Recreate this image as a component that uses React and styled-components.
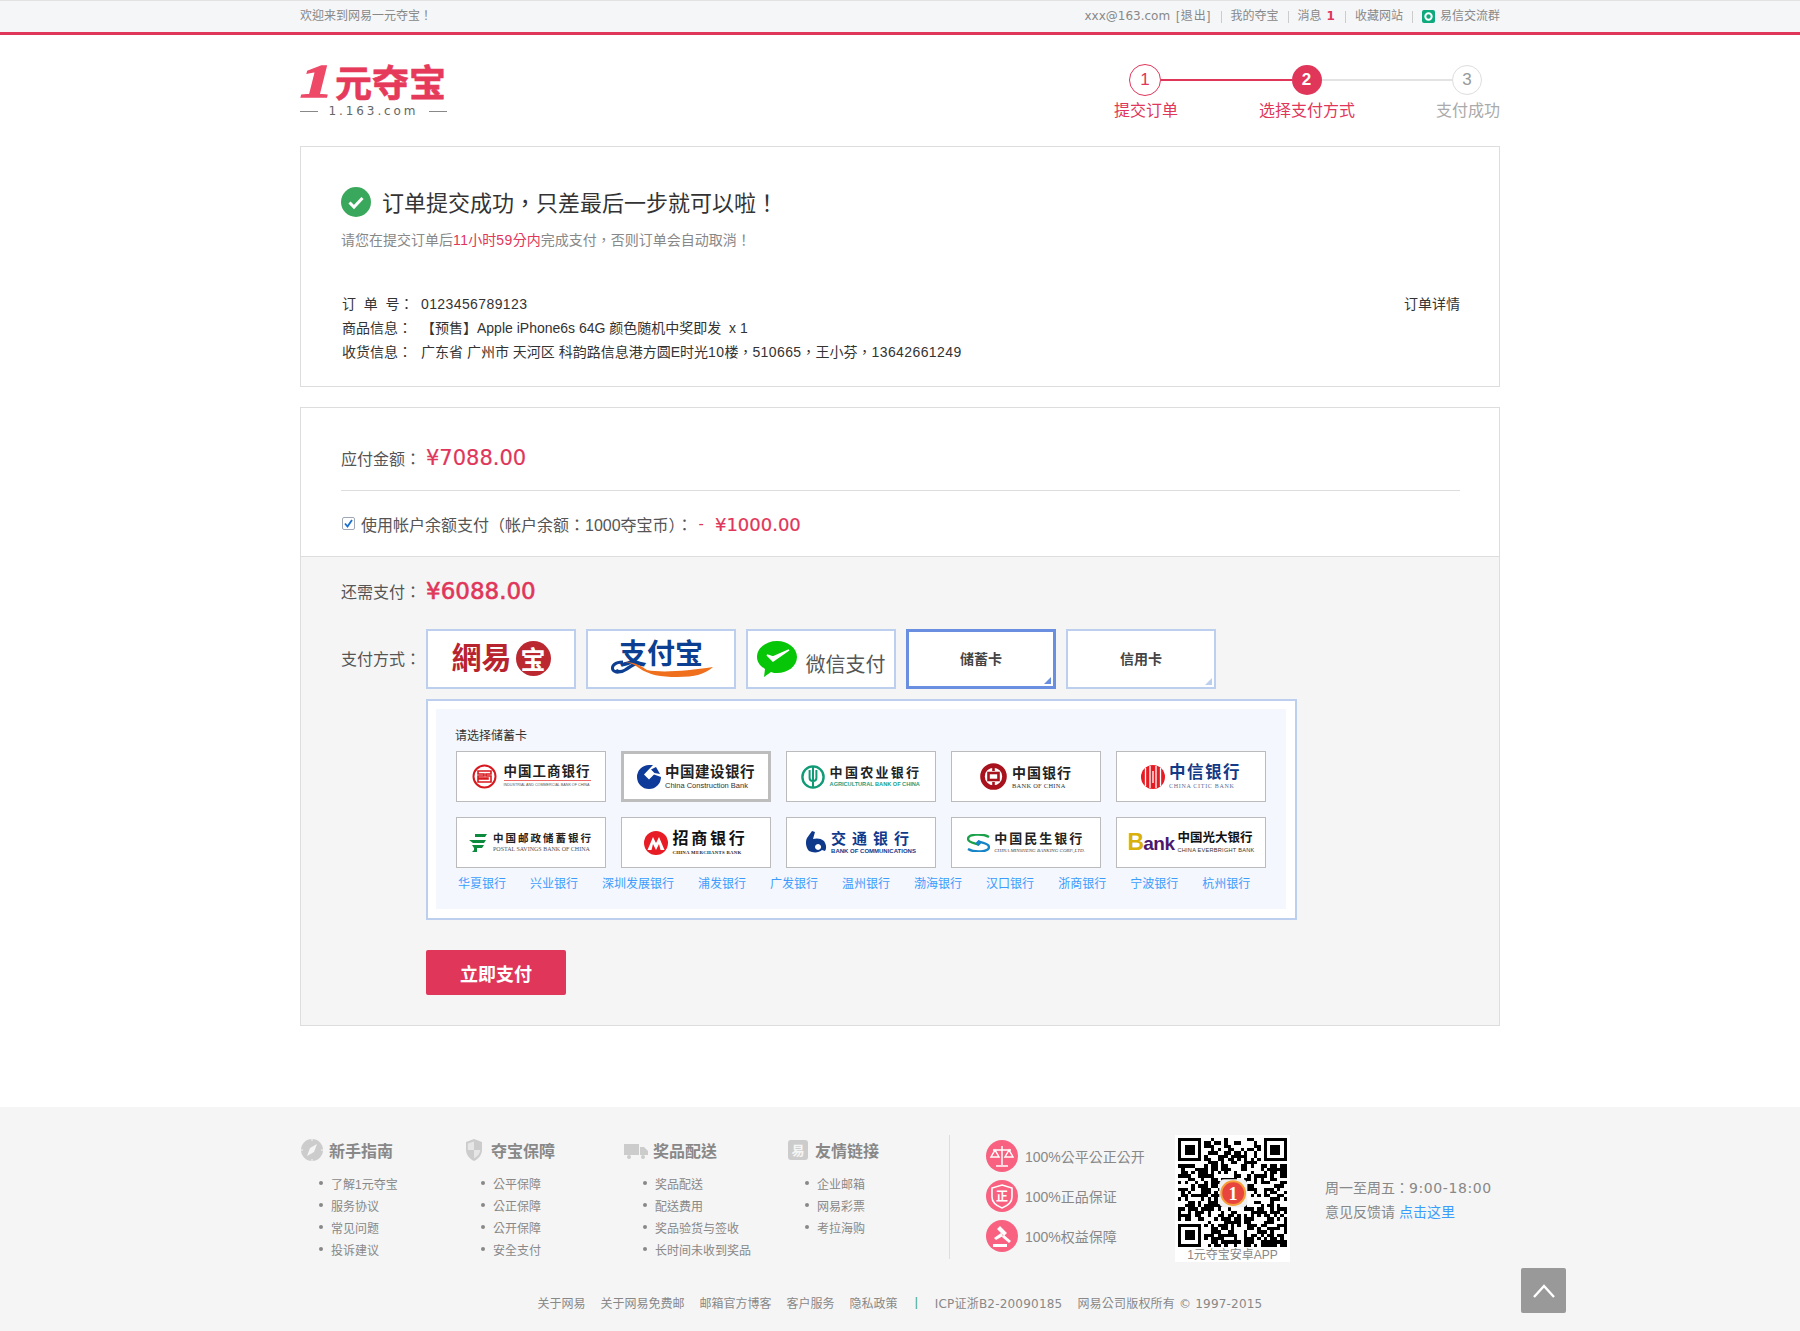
import React from "react";
import styled, { createGlobalStyle } from "styled-components";

const SANS = `"Liberation Sans", "Noto Sans CJK TC", sans-serif`;
const WIDE = `"DejaVu Sans", "Noto Sans CJK TC", sans-serif`;
const RED = "#e0365a";
const BLUE = "#3c9cfc";

const Global = createGlobalStyle`
  html, body { margin: 0; padding: 0; background: #fff; }
  body { font-family: ${SANS}; color: #333; font-size: 12px; }
  * { box-sizing: border-box; }
  a { color: inherit; text-decoration: none; }
  ul { list-style: none; margin: 0; padding: 0; }
`;

const Page = styled.div`position: relative; width: 1800px; height: 1331px; overflow: hidden;`;
const Wrap = styled.div`width: 1200px; margin: 0 auto;`;

/* ---------- top bar ---------- */
const TopBar = styled.div`
  height: 35px; background: #f5f6f8; border-top: 1px solid #e2e2e2; border-bottom: 3px solid #e0365a;
`;
const TopInner = styled(Wrap)`
  height: 31px; display: flex; align-items: center; justify-content: space-between;
  color: #888; line-height: 31px;
`;
const TopLinks = styled.div`display: flex; align-items: center;`;
const TopLink = styled.a`
  display: flex; align-items: center; white-space: pre;
  font-family: ${p => p.$wide ? WIDE : SANS};
  letter-spacing: ${p => p.$ls || 0}px;
  margin-left: ${p => p.$ml || 0}px;
`;
const TopSep = styled.span`width: 1px; height: 12px; background: #ccc; margin: 0 9px;`;
const TopCount = styled.b`color: ${RED}; margin: 0 1px 0 5px; font-family: ${WIDE}; font-size: 12px;`;

/* ---------- header ---------- */
const Header = styled(Wrap)`height: 111px; display: flex; justify-content: space-between;`;
const Logo = styled.div`padding-top: 26px; width: 147px;`;
const LogoMark = styled.div`
  display: flex; align-items: baseline; height: 41px; font-weight: 700; font-size: 37px; line-height: 42px;
  color: #e63a5b; -webkit-text-stroke: 0.6px #e63a5b; white-space: nowrap;
`;
const LogoOne = styled.span`
  display: inline-block; font-style: italic; font-size: 46px; font-weight: 700; width: 35px; flex: none; line-height: 42px;
  font-family: "Liberation Serif", serif; -webkit-text-stroke: 1.4px #ee4a68; color: #ee4a68;
  transform: scaleX(1.45); transform-origin: left bottom;
`;
const LogoSub = styled.div`display: flex; align-items: center; justify-content: space-between; color: #666; font-size: 12px; font-family: ${WIDE}; letter-spacing: 2.9px; height: 18px;`;
const LogoRule = styled.i`display: block; width: 18px; height: 1px; background: #888;`;

const Stepper = styled.div`width: 386px; padding-top: 29px;`;
const Track = styled.div`display: flex; align-items: center; height: 32px; padding: 0 18px 0 15px;`;
const Dot = styled.span`
  flex: none; display: flex; align-items: center; justify-content: center; border-radius: 50%;
  width: ${p => p.$size}px; height: ${p => p.$size}px;
  font-size: 17px; font-weight: ${p => p.$filled ? 700 : 400};
  color: ${p => p.$filled ? "#fff" : p.$on ? RED : "#999"};
  background: ${p => p.$filled ? RED : "#fff"};
  border: ${p => p.$filled ? "none" : `1px solid ${p.$on ? RED : "#ddd"}`};
`;
const TrackLine = styled.span`flex: 1; height: 2px; background: ${p => p.$on ? RED : "#e3e3e3"};`;
const StepLabels = styled.div`display: flex; justify-content: space-between; margin-top: 4px;`;
const StepLabel = styled.span`font-size: 16px; line-height: 22px; color: ${p => p.$on ? RED : "#aaa"};`;

/* ---------- order card ---------- */
const Card = styled(Wrap)`border: 1px solid #ddd;`;
const OrderCard = styled(Card)`height: 241px; padding: 40px 39px 0 40px;`;
const TitleRow = styled.div`display: flex; align-items: center; gap: 11px; height: 30px;`;
const OkIcon = styled.svg`width: 30px; height: 30px; flex: none;`;
const Title = styled.h1`margin: -2px 0 0; font-weight: 400; font-size: 22px; color: #333;`;
const Notice = styled.p`margin: 13px 0 0; font-size: 14px; line-height: 20px; color: #888;`;
const Hot = styled.span`color: ${RED};`;
const Num = styled.span`letter-spacing: 0.4px;`;
const InfoBlock = styled.div`margin-top: 42px; position: relative; padding-left: 1px;`;
const InfoRow = styled.div`display: flex; font-size: 14px; line-height: 24px; color: #333;`;
const InfoKey = styled.span`width: 79px; flex: none; white-space: pre;`;
const InfoAction = styled.a`position: absolute; right: 0; top: 0; font-size: 14px; line-height: 24px;`;

/* ---------- payment card ---------- */
const PayCard = styled(Card)`margin-top: 20px; height: 619px; display: flex; flex-direction: column;`;
const Summary = styled.div`padding: 0 39px 0 40px;`;
const DueRow = styled.div`display: flex; align-items: center; height: 83px; padding-top: 18px; border-bottom: 1px solid #ddd;`;
const Label = styled.span`font-size: 16px; color: #555; width: 85px; flex: none;`;
const Amount = styled.span`
  color: ${RED}; font-family: ${WIDE}; font-size: ${p => p.$size}px; white-space: nowrap;
  -webkit-text-stroke: ${p => p.$stroke || 0.2}px ${RED};
`;
const BalanceRow = styled.div`display: flex; align-items: center; height: 65px; font-size: 16px; color: #555;`;
const Check = styled.span`
  width: 13px; height: 13px; background: #fff; border: 1px solid #9fa8b4; border-radius: 2px; margin: 0 6px 0 1px;
  display: flex; align-items: center; justify-content: center;
  svg { width: 11px; height: 11px; }
`;
const Minus = styled.span`color: ${RED}; margin: 0 11px 0 6px;`;
const BalanceAmount = styled(Amount)`margin-top: 2px;`;
const PaySection = styled.div`flex: 1; background: #f5f5f5; border-top: 1px solid #ddd; padding: 14px 39px 0 40px;`;
const RemainRow = styled.div`display: flex; align-items: center; height: 40px;`;
const MethodRow = styled.div`display: flex; align-items: flex-start; margin-top: 18px;`;
const MethodLabel = styled(Label)`height: 60px; line-height: 62px;`;
const MethodTiles = styled.div`display: flex; gap: 10px;`;
const MethodTile = styled.div`
  position: relative; width: 150px; height: 60px; background: #fff; display: flex; align-items: center; justify-content: center;
  padding-bottom: 2px;
  border: ${p => p.$active ? "3px solid #6a8fe0" : "2px solid #bccfef"};
  font-size: 14px; font-weight: 700; color: #444;
  ${p => p.$corner ? `&::after { content: ""; position: absolute; right: 2px; bottom: 2px; border-style: solid; border-width: 0 0 7px 7px; border-color: transparent transparent ${p.$active ? "#6a8fe0" : "#bccfef"} transparent; }` : ""}
`;
const WyText = styled.span`font-size: 30px; font-weight: 700; color: #b8242e; line-height: 1;`;
const WyBadge = styled.span`
  width: 35px; height: 35px; border-radius: 50%; background: #bb2830; color: #fff; margin-left: 4px;
  display: flex; align-items: center; justify-content: center; font-size: 25px; font-weight: 700;
`;
const AliText = styled.span`font-size: 28px; font-weight: 700; color: #0c3f92; line-height: 1; transform: translateY(-3px);`;
const Swoosh = styled.svg`position: absolute; left: 23px; top: 29px; width: 102px; height: 18px;`;
const WxIcon = styled.svg`width: 40px; height: 36px; flex: none; margin: 2px 9px 0 0;`;
const WxText = styled.span`font-size: 20px; font-weight: 400; color: #555; margin-top: 10px; white-space: nowrap;`;

const BankPanel = styled.div`
  width: 871px; height: 221px; margin: 10px 0 0 85px; background: #fff; border: 2px solid #bccfef; padding: 8px;
`;
const BankInner = styled.div`height: 200px; width: 850px; background: #f4f7fd; padding: 18px 20px 0 20px;`;
const BankHead = styled.div`font-size: 12px; line-height: 18px; color: #333; margin: 0 0 6px -1px;`;
const BankGrid = styled.div`display: grid; grid-template-columns: repeat(5, 150px); gap: 15px;`;
const BankTile = styled.div`
  height: 51px; background: #fff; display: flex; align-items: center; justify-content: center; overflow: hidden;
  gap: ${p => p.$gap ?? 7}px; border: ${p => p.$active ? "3px solid #bdbdbd" : "1px solid #bbb"};
`;
const Emblem = styled.svg`flex: none; width: ${p => p.$w}px; height: ${p => p.$h}px;`;
const BankNames = styled.div`display: flex; flex-direction: column; align-items: stretch; line-height: 1;`;
const BankZh = styled.span`
  font-size: ${p => p.$size}px; font-weight: 700; color: ${p => p.$color}; letter-spacing: ${p => p.$ls}px;
  white-space: nowrap; line-height: ${p => p.$size + 2}px; font-family: "Liberation Sans", "Noto Sans CJK SC", sans-serif;
`;
const BankEn = styled.span`
  font-size: ${p => p.$size}px; color: ${p => p.$color}; white-space: nowrap; line-height: 7px; margin-top: 1px;
  font-weight: ${p => p.$bold ? 700 : 400}; font-family: ${p => p.$serif ? `"Liberation Serif", serif` : SANS};
  font-style: ${p => p.$italic ? "italic" : "normal"}; letter-spacing: ${p => p.$ls || 0}px;
  ${p => p.$rule ? "border-top: 1px solid #e66; padding-top: 1px;" : ""}
`;
const EbBig = styled.span`font-size: 23px; font-weight: 700; color: #d9b10c; letter-spacing: -1px;`;
const EbRest = styled.span`font-size: 19px; font-weight: 700; color: #4b1870; letter-spacing: -0.5px;`;
const EbMark = styled.span`display: flex; align-items: baseline;`;

const BankLinks = styled.div`display: flex; gap: 24px; padding-left: 2px; margin-top: 7px;`;
const BankLink = styled.a`color: ${BLUE}; font-size: 12px; line-height: 18px; white-space: nowrap;`;
const PayButton = styled.button`
  display: block; width: 140px; height: 45px; margin: 30px 0 0 85px; background: ${RED}; color: #fff; border: 0; border-radius: 2px;
  font-family: ${SANS}; font-size: 18px; font-weight: 700;
`;

/* ---------- footer ---------- */
const Footer = styled.div`margin-top: 81px; height: 224px; background: #f5f5f5; padding-top: 28px;`;
const FootMain = styled(Wrap)`display: flex; height: 127px;`;
const Guide = styled.div`width: 162px; flex: none;`;
const GuideHead = styled.div`display: flex; align-items: center; height: 30px; color: #888; font-size: 16px; font-weight: 700;`;
const GuideIcon = styled.svg`width: 24px; height: 24px; flex: none; margin-right: 5px;`;
const GuideList = styled.ul`margin-top: 7px; padding-left: 19px;`;
const GuideItem = styled.li`
  display: flex; align-items: center; height: 22px; color: #888; font-size: 12px; white-space: nowrap;
  &::before { content: ""; width: 4px; height: 4px; border-radius: 50%; background: #888; margin-right: 8px; }
`;
const Assure = styled.div`
  width: 226px; flex: none; margin-left: 1px; border-left: 1px solid #ddd; padding: 5px 0 0 36px; height: 124px;
  display: flex; flex-direction: column; gap: 8px;
`;
const AssureRow = styled.div`display: flex; align-items: center; gap: 7px; height: 32px; font-size: 14px; color: #888; white-space: nowrap;`;
const AssureIcon = styled.svg`width: 32px; height: 32px; flex: none;`;
const QrBox = styled.div`width: 115px; height: 127px; background: #fff; flex: none; display: flex; flex-direction: column; align-items: center; padding-top: 3px; overflow: hidden;`;
const QrSvg = styled.svg`width: 109px; height: 109px; flex: none;`;
const QrCap = styled.span`font-size: 12px; color: #888; line-height: 15px; margin-top: 1px; white-space: nowrap;`;
const Contact = styled.div`margin-left: 35px; padding-top: 41px; font-size: 14px; line-height: 24px; color: #888;`;
const ContactTime = styled.span`font-family: ${WIDE}; font-size: 14px; letter-spacing: 0.6px;`;
const ContactLink = styled.a`color: ${BLUE};`;
const FootLinks = styled(Wrap)`display: flex; justify-content: center; align-items: center; gap: 15px; height: 20px; margin-top: 30px; color: #888; font-size: 12px; white-space: nowrap;`;
const FootBar = styled.span`color: #39a85a; margin: 0 2px;`;
const FootWide = styled.span`font-family: ${WIDE}; font-size: 12px; letter-spacing: 0.2px;`;
const ToTop = styled.a`
  position: absolute; left: 1521px; top: 1268px; width: 45px; height: 45px; background: #999; border-radius: 2px;
  display: flex; align-items: center; justify-content: center;
  svg { width: 24px; height: 16px; }
`;

/* ---------- drawings ---------- */
function makeQr() {
  const n = 33; const cells = [];
  let seed = 77;
  const rnd = () => { seed = (seed * 1103515245 + 12345) & 0x7fffffff; return (seed >> 12) % 100; };
  const inF = (x, y, a, b) => x >= a && x < a + 7 && y >= b && y < b + 7;
  const fin = (x, y, a, b) => { const i = x - a, j = y - b; return i === 0 || j === 0 || i === 6 || j === 6 || (i >= 2 && i <= 4 && j >= 2 && j <= 4); };
  for (let y = 0; y < n; y++) for (let x = 0; x < n; x++) {
    let on;
    if (inF(x, y, 0, 0)) on = fin(x, y, 0, 0);
    else if (inF(x, y, n - 7, 0)) on = fin(x, y, n - 7, 0);
    else if (inF(x, y, 0, n - 7)) on = fin(x, y, 0, n - 7);
    else if (x === 7 && y < 8 || y === 7 && x < 8 || x === n - 8 && y < 8 || y === 7 && x >= n - 8 || x === 7 && y >= n - 8 || y === n - 8 && x < 8) on = false;
    else on = rnd() < 55;
    if (on) cells.push(`M${x} ${y}h1v1h-1z`);
  }
  return cells.join("");
}
const QR_PATH = makeQr();

const banks = [
  { zh: "中国工商银行", size: 13.5, ls: 1, color: "#222", en: "INDUSTRIAL AND COMMERCIAL BANK OF CHINA", enSize: 3.7, enColor: "#555", rule: true, w: 25, h: 25, emblem: (
    <><circle cx="12.5" cy="12.5" r="11" fill="none" stroke="#d7191f" strokeWidth="2" /><path d="M6 7h13v3H14v2h5v6H6v-3h10v-1H6v-2h6v-2H6z" fill="none" stroke="#d7191f" strokeWidth="1.6" /></>) },
  { zh: "中国建设银行", size: 14.5, ls: 0.5, color: "#222", en: "China Construction Bank", enSize: 7.5, enColor: "#333", active: true, w: 24, h: 24, gap: 4, emblem: (
    <path d="M12 0 L16 0 L7 9.5 L12 14.5 L17 9.5 L24 12 A12 12 0 1 1 12 0Z M19 2 L23 9 L17.5 8 L14 4.5Z" fill="#0e3a9a" />) },
  { zh: "中国农业银行", size: 13, ls: 2.3, color: "#222", en: "AGRICULTURAL BANK OF CHINA", enSize: 5.6, enColor: "#16a085", bold: true, w: 24, h: 24, gap: 5, emblem: (
    <><circle cx="12" cy="12" r="10.6" fill="none" stroke="#109a76" strokeWidth="2.4" /><path d="M12 1v22M8.6 5v8c0 2 1.5 3 3.4 3s3.4-1 3.4-3V5" fill="none" stroke="#109a76" strokeWidth="2" /></>) },
  { zh: "中国银行", size: 14, ls: 1, color: "#222", en: "BANK OF CHINA", enSize: 6.4, enColor: "#333", serif: true, ls2: 0.3, w: 27, h: 27, gap: 5, emblem: (
    <><circle cx="13.5" cy="13.5" r="11" fill="none" stroke="#a8121d" strokeWidth="4.6" /><rect x="8.5" y="10" width="10" height="7" fill="none" stroke="#a8121d" strokeWidth="2.6" /><path d="M13.5 2v6M13.5 19v6" stroke="#a8121d" strokeWidth="2.6" /></>) },
  { zh: "中信银行", size: 16.5, ls: 1.5, color: "#123a86", en: "CHINA CITIC BANK", enSize: 6, enColor: "#5a6c98", serif: true, ls2: 0.7, w: 24, h: 24, gap: 4, emblem: (
    <><circle cx="12" cy="12" r="12" fill="#e51c23" /><path d="M4.5 3v18M9 1v22M12 6v12M15 1v22M19.5 3v18" stroke="#fff" strokeWidth="1.3" /></>) },
  { zh: "中国邮政储蓄银行", size: 10.5, ls: 2, color: "#222", en: "POSTAL SAVINGS BANK OF CHINA", enSize: 6, enColor: "#555", serif: true, w: 18, h: 18, gap: 6, emblem: (
    <path d="M6 0h12l-2 3H6zM0 6h17l-2 3H4L2 7.5zM3 11h12l-2 3H8v4H3l2-2V14z" fill="#0c8a3e" />) },
  { zh: "招商银行", size: 16, ls: 2.8, color: "#111", en: "CHINA MERCHANTS BANK", enSize: 4.8, enColor: "#222", serif: true, bold: true, ls2: 0.3, w: 24, h: 24, gap: 4, emblem: (
    <><circle cx="12" cy="12" r="12" fill="#e81c24" /><path d="M3.5 19 9 6l3 6 3-6 5.5 13h-4L15 13l-3 6-3-6-1.5 6z" fill="#fff" /></>) },
  { zh: "交通银行", size: 15, ls: 6, color: "#0f3a8c", en: "BANK OF COMMUNICATIONS", enSize: 6, enColor: "#0f3a8c", bold: true, w: 22, h: 24, gap: 3, emblem: (
    <path d="M6 0 9 1 7 8c3-1 8-1 11 2 2 3 3 7 1 10l-3-1c-3 3-9 3-13 1C0 17-1 11 1 7zM12 13a3 3 0 1 0 .1 0z" fill="#0f3a8c" />) },
  { zh: "中国民生银行", size: 13, ls: 2, color: "#222", en: "CHINA MINSHENG BANKING CORP.,LTD.", enSize: 5, enColor: "#444", serif: true, italic: true, w: 23, h: 18, gap: 4, emblem: (
    <><path d="M22 3C15-1 1 0 1 5c0 4 8 4 11 6" fill="none" stroke="#1aa14a" strokeWidth="2.4" /><path d="M1 15c7 4 21 3 21-2 0-4-8-4-11-6" fill="none" stroke="#1684c6" strokeWidth="2.4" /><path d="M11.5 6l3 3-3 3-3-3z" fill="#1684c6" /></>) },
];

const otherBanks = ["华夏银行","兴业银行","深圳发展银行","浦发银行","广发银行","温州银行","渤海银行","汉口银行","浙商银行","宁波银行","杭州银行"];

const guides = [
  { title: "新手指南", items: ["了解1元夺宝","服务协议","常见问题","投诉建议"], icon: (
    <><circle cx="12" cy="12" r="11" fill="#ccc" /><path d="M17 6 14 14 7 18 10 10z" fill="#f5f5f5" /><path d="M12 0v3M12 21v3M0 12h3M21 12h3" stroke="#f5f5f5" strokeWidth="1" /></>) },
  { title: "夺宝保障", items: ["公平保障","公正保障","公开保障","安全支付"], icon: (
    <><path d="M12 1 20 4v8c0 5-4 9-8 11-4-2-8-6-8-11V4z" fill="#ccc" /><path d="M12 3.5V12H5.8V5.5zM12 12h6.2c0 3.5-3 6.8-6.2 8.3z" fill="#e6e6e6" /></>) },
  { title: "奖品配送", items: ["奖品配送","配送费用","奖品验货与签收","长时间未收到奖品"], icon: (
    <><path d="M0 6h15v11H0zM16 9h4l4 4v4h-8z" fill="#ccc" /><circle cx="5" cy="19" r="2" fill="#ccc" /><circle cx="19" cy="19" r="2" fill="#ccc" /></>) },
  { title: "友情链接", items: ["企业邮箱","网易彩票","考拉海购"], icon: (
    <><rect x="2" y="2" width="20" height="20" rx="3" fill="#ccc" /><text x="12" y="17" textAnchor="middle" fontSize="13" fontWeight="700" fill="#f5f5f5" fontFamily="Noto Sans CJK SC">易</text></>) },
];

export default function App() {
  return (
    <Page>
      <Global />
      <TopBar>
        <TopInner>
          <span>欢迎来到网易一元夺宝！</span>
          <TopLinks>
            <TopLink $wide>xxx@163.com</TopLink><TopLink $ls={1.2} $ml={6}>[退出]</TopLink>
            <TopSep /><TopLink>我的夺宝</TopLink>
            <TopSep /><TopLink>消息<TopCount>1</TopCount></TopLink>
            <TopSep /><TopLink>收藏网站</TopLink>
            <TopSep />
            <TopLink>
              <svg width="13" height="13" viewBox="0 0 13 13" style={{ marginRight: 5 }}><rect width="13" height="13" rx="2" fill="#0fa97e" /><circle cx="6.5" cy="6.5" r="3.2" fill="none" stroke="#fff" strokeWidth="2" /></svg>
              易信交流群
            </TopLink>
          </TopLinks>
        </TopInner>
      </TopBar>

      <Header>
        <Logo>
          <LogoMark><LogoOne>1</LogoOne>元夺宝</LogoMark>
          <LogoSub><LogoRule />1.163.com<LogoRule /></LogoSub>
        </Logo>
        <Stepper>
          <Track>
            <Dot $size={32} $on>1</Dot>
            <TrackLine $on />
            <Dot $size={30} $filled>2</Dot>
            <TrackLine />
            <Dot $size={30}>3</Dot>
          </Track>
          <StepLabels>
            <StepLabel $on>提交订单</StepLabel>
            <StepLabel $on>选择支付方式</StepLabel>
            <StepLabel>支付成功</StepLabel>
          </StepLabels>
        </Stepper>
      </Header>

      <OrderCard>
        <TitleRow>
          <OkIcon viewBox="0 0 30 30"><circle cx="15" cy="15" r="15" fill="#3aa85c" /><path d="M8.5 15.5l4.5 4.5 8.5-9" fill="none" stroke="#fff" strokeWidth="3" /></OkIcon>
          <Title>订单提交成功，只差最后一步就可以啦！</Title>
        </TitleRow>
        <Notice>请您在提交订单后<Hot><Num>11</Num>小时<Num>59</Num>分内</Hot>完成支付，否则订单会自动取消！</Notice>
        <InfoBlock>
          <InfoRow><InfoKey>{"订  单  号："}</InfoKey><Num>0123456789123</Num></InfoRow>
          <InfoRow><InfoKey>商品信息：</InfoKey><span>【预售】Apple iPhone6s 64G 颜色随机中奖即发&nbsp;&nbsp;x 1</span></InfoRow>
          <InfoRow><InfoKey>收货信息：</InfoKey><span>广东省 广州市 天河区 科韵路信息港方圆E时光<Num>10</Num>楼，<Num>510665</Num>，王小芬，<Num>13642661249</Num></span></InfoRow>
          <InfoAction>订单详情</InfoAction>
        </InfoBlock>
      </OrderCard>

      <PayCard>
        <Summary>
          <DueRow><Label>应付金额：</Label><Amount $size={21}>¥7088.00</Amount></DueRow>
          <BalanceRow>
            <Check><svg viewBox="0 0 11 11"><path d="M2 5.5l2.5 3L9 2" fill="none" stroke="#1b6fd0" strokeWidth="1.8" /></svg></Check>
            使用帐户余额支付（帐户余额：1000夺宝币）：
            <Minus>-</Minus>
            <BalanceAmount $size={18}>¥1000.00</BalanceAmount>
          </BalanceRow>
        </Summary>
        <PaySection>
          <RemainRow><Label>还需支付：</Label><Amount $size={23} $stroke={0.6}>¥6088.00</Amount></RemainRow>
          <MethodRow>
            <MethodLabel>支付方式：</MethodLabel>
            <MethodTiles>
              <MethodTile><WyText>網易</WyText><WyBadge>宝</WyBadge></MethodTile>
              <MethodTile>
                <AliText>支付宝</AliText>
                <Swoosh viewBox="0 0 102 18"><path d="M12 2C4 2 0 6 2 10c2 3 8 3 14-1 4-3 7-5 10-5-4 0-8 3-12 6-4 2-7 2-9 0" fill="none" stroke="#0c3f92" strokeWidth="3" /><path d="M14 2c10 0 16 4 22 8 14 3 40 1 66-3-8 7-18 10-36 10-16 0-28-2-38-9-4-3-8-5-14-6z" fill="#ef6f1c" /></Swoosh>
              </MethodTile>
              <MethodTile>
                <WxIcon viewBox="0 0 40 36"><path d="M20 0c11 0 20 7 20 16s-9 16-20 16c-2 0-4 0-6-1l-7 5 1-8C3 25 0 21 0 16 0 7 9 0 20 0z" fill="#07c607" /><path d="M10 14l6 6 16-11-16 7z" fill="#fff" stroke="#fff" strokeWidth="1.5" /></WxIcon>
                <WxText>微信支付</WxText>
              </MethodTile>
              <MethodTile $active $corner>储蓄卡</MethodTile>
              <MethodTile $corner>信用卡</MethodTile>
            </MethodTiles>
          </MethodRow>
          <BankPanel>
            <BankInner>
              <BankHead>请选择储蓄卡</BankHead>
              <BankGrid>
                {banks.map(b => (
                  <BankTile key={b.zh} $active={b.active} $gap={b.gap}>
                    <Emblem $w={b.w} $h={b.h} viewBox={`0 0 ${b.w} ${b.h}`}>{b.emblem}</Emblem>
                    <BankNames>
                      <BankZh $size={b.size} $ls={b.ls} $color={b.color}>{b.zh}</BankZh>
                      <BankEn $size={b.enSize} $color={b.enColor} $bold={b.bold} $serif={b.serif} $italic={b.italic} $ls={b.ls2} $rule={b.rule}>{b.en}</BankEn>
                    </BankNames>
                  </BankTile>
                ))}
                <BankTile $gap={3}>
                  <EbMark><EbBig>B</EbBig><EbRest>ank</EbRest></EbMark>
                  <BankNames>
                    <BankZh $size={12.5} $ls={0} $color="#111">中国光大银行</BankZh>
                    <BankEn $size={5.6} $color="#333" $ls={0.25}>CHINA EVERBRIGHT BANK</BankEn>
                  </BankNames>
                </BankTile>
              </BankGrid>
              <BankLinks>{otherBanks.map(n => <BankLink key={n}>{n}</BankLink>)}</BankLinks>
            </BankInner>
          </BankPanel>
          <PayButton>立即支付</PayButton>
        </PaySection>
      </PayCard>

      <Footer>
        <FootMain>
          {guides.map(g => (
            <Guide key={g.title}>
              <GuideHead><GuideIcon viewBox="0 0 24 24">{g.icon}</GuideIcon>{g.title}</GuideHead>
              <GuideList>{g.items.map(i => <GuideItem key={i}>{i}</GuideItem>)}</GuideList>
            </Guide>
          ))}
          <Assure>
            <AssureRow>
              <AssureIcon viewBox="0 0 32 32"><circle cx="16" cy="16" r="16" fill="#f8617f" /><path d="M16 6v19M10 26h12M7 10h18M9 10l-4 7h8zM23 10l-4 7h8z" fill="none" stroke="#fff" strokeWidth="1.5" /></AssureIcon>
              100%公平公正公开
            </AssureRow>
            <AssureRow>
              <AssureIcon viewBox="0 0 32 32"><circle cx="16" cy="16" r="16" fill="#f8617f" /><path d="M16 5l10 3v9c0 5-5 9-10 11C11 26 6 22 6 17V8z" fill="none" stroke="#fff" strokeWidth="1.6" /><text x="16" y="21" textAnchor="middle" fontSize="12" fontWeight="700" fill="#fff" fontFamily="Noto Sans CJK SC">正</text></AssureIcon>
              100%正品保证
            </AssureRow>
            <AssureRow>
              <AssureIcon viewBox="0 0 32 32"><circle cx="16" cy="16" r="16" fill="#f8617f" /><path d="M14 6l7 7-3 3-7-7zM15 13l-7 5 2 2 7-4zM18 15l7 6-2 2-7-6zM7 24h14v3H7z" fill="#fff" /></AssureIcon>
              100%权益保障
            </AssureRow>
          </Assure>
          <QrBox>
            <QrSvg viewBox="0 0 33 33" shapeRendering="crispEdges">
              <path d="M0 0h33v33H0z" fill="#fff" />
              <path d={QR_PATH} fill="#000" />
              <rect x="12.5" y="12.5" width="8.5" height="8.5" rx="1.5" fill="#f0f0f0" shapeRendering="auto" />
              <circle cx="16.7" cy="16.7" r="3.6" fill="#e9453f" stroke="#f5a03a" strokeWidth="0.6" shapeRendering="auto" />
              <text x="16.7" y="18.7" textAnchor="middle" fontSize="5.5" fontWeight="700" fill="#fff" fontFamily="Liberation Serif" shapeRendering="auto">1</text>
            </QrSvg>
            <QrCap>1元夺宝安卓APP</QrCap>
          </QrBox>
          <Contact>
            <div>周一至周五：<ContactTime>9:00-18:00</ContactTime></div>
            <div>意见反馈请 <ContactLink>点击这里</ContactLink></div>
          </Contact>
        </FootMain>
        <FootLinks>
          <span>关于网易</span><span>关于网易免费邮</span><span>邮箱官方博客</span><span>客户服务</span><span>隐私政策</span>
          <FootBar>|</FootBar>
          <FootWide>ICP证浙B2-20090185</FootWide>
          <FootWide>网易公司版权所有 © 1997-2015</FootWide>
        </FootLinks>
      </Footer>

      <ToTop><svg viewBox="0 0 24 16"><path d="M2 14 12 3l10 11" fill="none" stroke="#fff" strokeWidth="2.4" /></svg></ToTop>
    </Page>
  );
}
